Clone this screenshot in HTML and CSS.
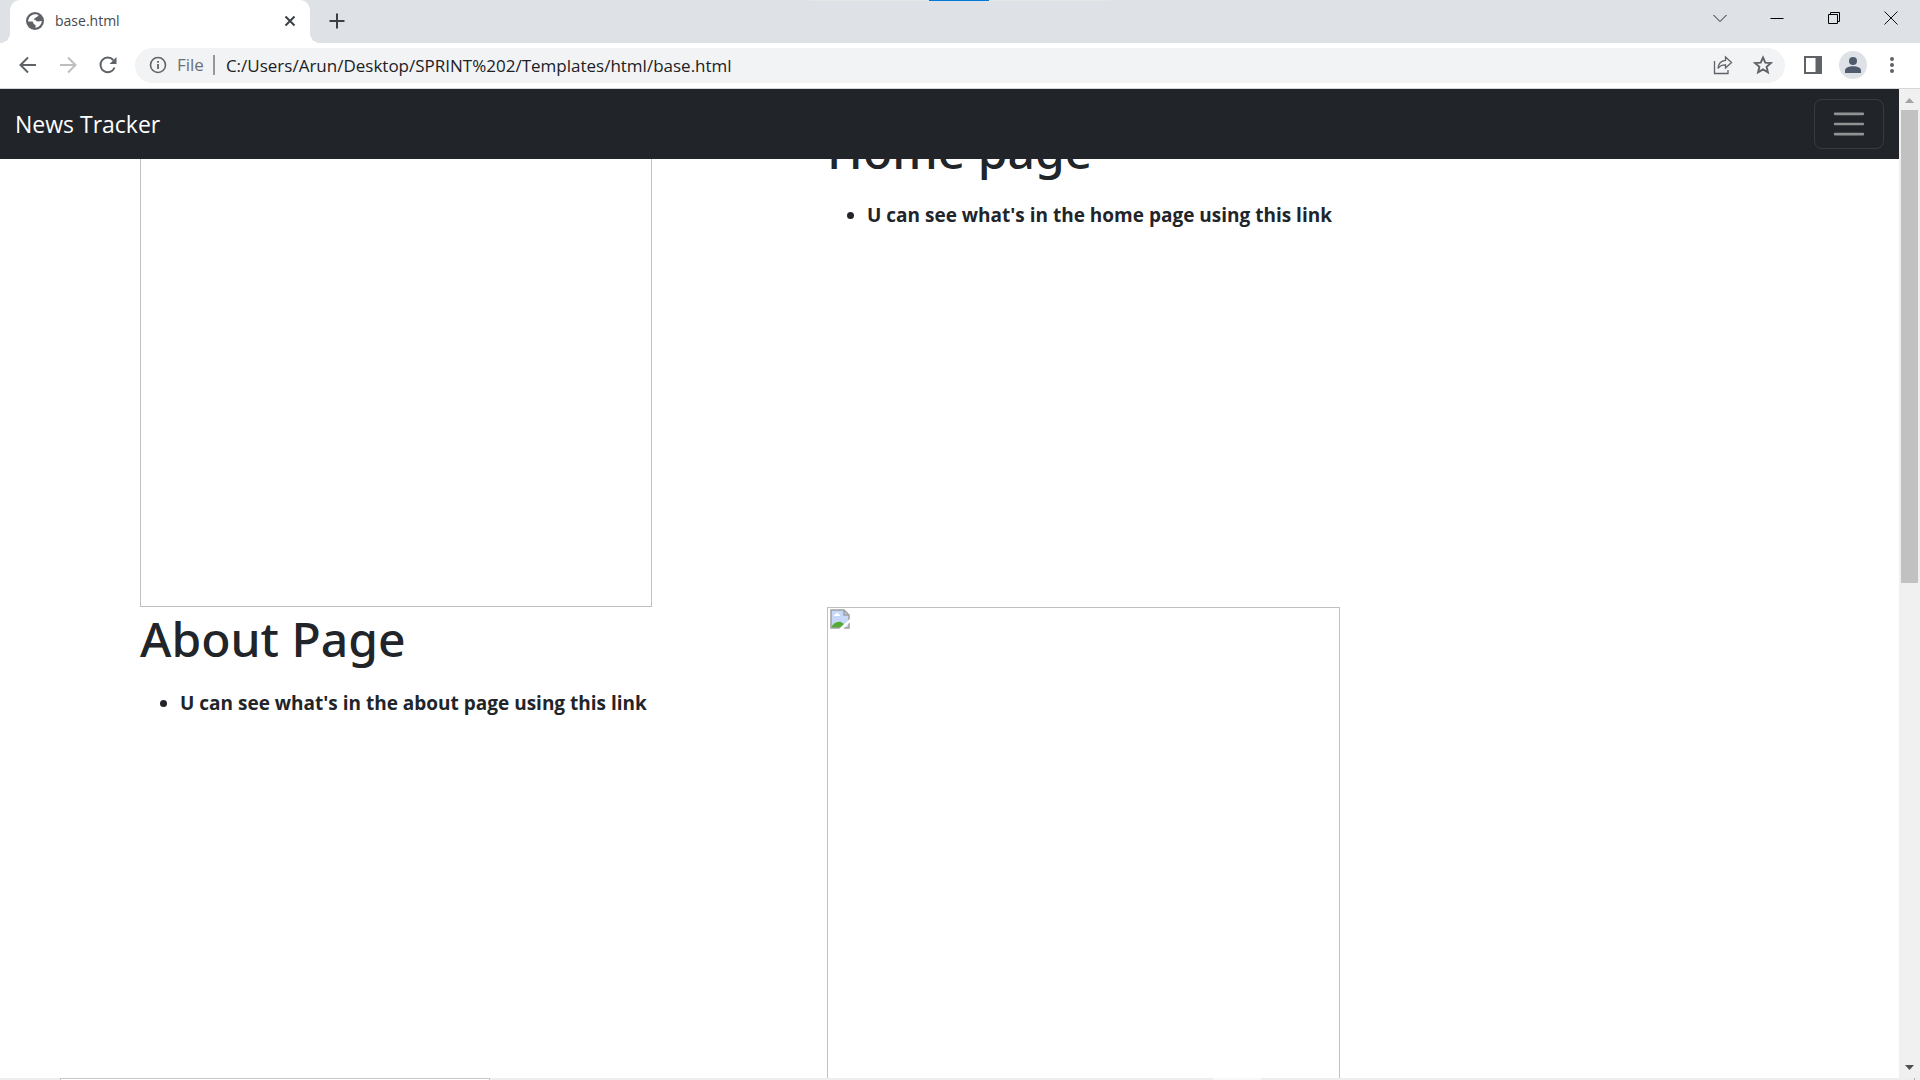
FILE: index.html
```html
<!DOCTYPE html>
<html lang="en">
<head>
<meta charset="utf-8">
<meta name="viewport" content="width=device-width, initial-scale=1">
<title>base.html</title>
<link rel="stylesheet" href="styles.css">
</head>
<body>
<div class="browser">
  <div class="tabstrip">
    <div class="tab">
      <svg class="globe" width="18" height="18" viewBox="0 0 18 18" aria-hidden="true"><circle cx="9" cy="9" r="9" fill="#5f6368"/><path d="M9 2.200c1.500 0 2.500.3 3.500.9-.2 1.200-1 1.700-2 1.800-1 .1-.9 1.300-2 1.500-.9.2-.8 1.200 0 1.400 1.500.2 1.700 1.600 3.500 1.600 1.300 0 2.500-.4 3.800-.4-.2 3.200-2.900 6.600-6.400 6.800-.6-.7.900-1.700.2-2.500-.7-.8-2.200-.9-2.200-2 0-1.300-.9-1.700-1.900-1.700H2.200C1.900 8.700 2.500 6.200 4.500 4.100 5.800 3 7.300 2.200 9 2.200z" fill="#fff"/></svg>
      <span class="tab-title">base.html</span>
      <button class="plain tab-close" aria-label="Close tab"><svg width="12" height="12" viewBox="0 0 12 12"><path d="M1.500 1.500l9 9M10.500 1.500l-9 9" stroke="#3c4043" stroke-width="2"/></svg></button>
    </div>
    <button class="plain new-tab" aria-label="New tab"><svg width="16" height="16" viewBox="0 0 16 16"><path d="M8 .5v15M.5 8h15" stroke="#3c4043" stroke-width="2"/></svg></button>
    <span class="drag-hint"></span>
    <div class="window-controls">
      <button class="plain" aria-label="Search tabs"><svg width="14" height="14" viewBox="0 0 14 14"><path d="M.5 4l6.500 6.500L13.500 4" fill="none" stroke="#222"/></svg></button>
      <button class="plain" aria-label="Minimize"><svg width="14" height="14" viewBox="0 0 14 14"><path d="M.5 7.500h13" stroke="#000"/></svg></button>
      <button class="plain" aria-label="Restore"><svg width="14" height="14" viewBox="0 0 14 14"><path d="M1.500 3.500h9v9h-9zM3.500 3.500v-2h9v9h-2" fill="none" stroke="#000"/></svg></button>
      <button class="plain" aria-label="Close"><svg width="14" height="14" viewBox="0 0 14 14"><path d="M.5.500l13 13M13.500.500l-13 13" stroke="#111"/></svg></button>
    </div>
  </div>

  <div class="toolbar">
    <div class="nav-buttons">
      <button class="plain" aria-label="Back"><svg width="20" height="20" viewBox="0 0 20 20"><path d="M18 10H3M10 2.500L2.500 10l7.500 7.500" fill="none" stroke="#5f6368" stroke-width="2"/></svg></button>
      <button class="plain" aria-label="Forward"><svg width="20" height="20" viewBox="0 0 20 20"><path d="M2 10h15M10 2.500l7.500 7.500-7.500 7.500" fill="none" stroke="#bcbec0" stroke-width="2"/></svg></button>
      <button class="plain" aria-label="Reload"><svg width="20" height="20" viewBox="0 0 20 20"><path d="M16.600 12.500A7.300 7.300 0 1 1 15.300 5" fill="none" stroke="#5f6368" stroke-width="2"/><path d="M18.500 2v7h-7z" fill="#5f6368"/></svg></button>
    </div>
    <div class="omnibox">
      <svg width="18" height="18" viewBox="0 0 18 18" aria-hidden="true"><circle cx="9" cy="9" r="7.500" fill="none" stroke="#5f6368" stroke-width="1.600"/><path d="M9 8v5M9 5v1.800" stroke="#5f6368" stroke-width="1.800"/></svg>
      <label class="scheme" for="url">File</label>
      <input class="url" id="url" type="text" value="C:/Users/Arun/Desktop/SPRINT%202/Templates/html/base.html">
      <button class="plain" aria-label="Share"><svg width="20" height="20" viewBox="0 0 20 20"><path d="M1.500 6v12.500H15V15" fill="none" stroke="#5f6368" stroke-width="1.300"/><path d="M12.500 2l6 5.500-6 5.500V9.800C9 9.700 6.500 11 5 13.500 5.300 9 8 5.800 12.500 5.300z" fill="none" stroke="#5f6368" stroke-width="1.300"/></svg></button>
      <button class="plain" aria-label="Bookmark"><svg width="20" height="20" viewBox="0 0 20 20"><path d="M10 2.500l2.300 5.100 5.500.5-4.200 3.700 1.300 5.500-4.900-2.900-4.900 2.900 1.300-5.500-4.200-3.700 5.500-.5z" fill="none" stroke="#5f6368" stroke-width="1.900"/></svg></button>
    </div>
    <div class="tools">
      <button class="plain" aria-label="Side panel"><svg width="18" height="18" viewBox="0 0 18 18"><path fill="#5f6368" fill-rule="evenodd" d="M0 0h18v18H0zM2 2v14h9.500V2z"/></svg></button>
      <button class="plain" aria-label="Profile"><svg width="28" height="28" viewBox="0 0 28 28"><circle cx="14" cy="14" r="14" fill="#dee1e6"/><circle cx="14" cy="10" r="4" fill="#4f5b6d"/><path d="M6 22v-2.500c0-3 4.500-4.200 8-4.200s8 1.200 8 4.200V22z" fill="#4f5b6d"/></svg></button>
      <button class="plain" aria-label="Menu"><svg width="6" height="18" viewBox="0 0 6 18"><g fill="#5f6368"><circle cx="3" cy="3" r="2"/><circle cx="3" cy="9" r="2"/><circle cx="3" cy="15" r="2"/></g></svg></button>
    </div>
  </div>

  <div class="viewport">
    <div class="page">
      <header class="navbar">
        <a class="brand" href="#">News Tracker</a>
        <button class="toggler" aria-label="Toggle navigation"><svg width="38" height="38" viewBox="0 0 30 30"><path d="M4 7h22M4 15h22M4 23h22" stroke="#909294" stroke-width="2" stroke-linecap="round"/></svg></button>
      </header>
      <main class="features">
        <div class="picture"></div>
        <section>
          <h1>Home page</h1>
          <ul><li>U can see what's in the home page using this link</li></ul>
        </section>
        <section>
          <h1>About Page</h1>
          <ul><li>U can see what's in the about page using this link</li></ul>
        </section>
        <div class="picture">
          <svg class="broken" width="20" height="20" viewBox="0 0 20 20" role="img" aria-label="Missing picture"><path d="M1 1h13l5 5v13H1z" fill="#c5d8f7"/><path d="M4 7c0-2 2-2 3-3 2 0 2 2 3 2v1z" fill="#fff"/><path d="M1 19c2-5 6-7 10-6l3 2-4 4z" fill="#56ab35"/><path d="M14 19h5v-5M10 19H1V1h13l5 5v5M14 1v5h5" fill="none" stroke="#a0a0a0" stroke-width="1.500"/><path d="M9 20L20 10v3l-7 7z" fill="#fff"/></svg>
        </div>
      </main>
    </div>
    <div class="scrollbar" aria-hidden="true">
      <svg width="9" height="5" viewBox="0 0 9 5"><path d="M4.500 0L9 5H0z" fill="#a3a3a3"/></svg>
      <div class="track"><div class="thumb"></div></div>
      <svg width="9" height="5" viewBox="0 0 9 5"><path d="M0 0h9L4.500 5z" fill="#505050"/></svg>
    </div>
  </div>

  <div class="taskbar" aria-hidden="true">
    <span class="task-search"></span>
    <span class="task-active"></span>
    <span class="task-end"></span>
  </div>
</div>
</body>
</html>
```
FILE: styles.css
```css
* { box-sizing: border-box; }

body {
  margin: 0;
  font-family: "Open Sans", "Noto Sans", sans-serif;
  color: #212529;
  background: #fff;
}

svg { display: block; flex: none; }

.plain {
  display: flex;
  align-items: center;
  justify-content: center;
  padding: 0;
  border: 0;
  background: none;
}

.browser {
  display: flex;
  flex-direction: column;
  height: 100vh;
  overflow: hidden;
}

/* Tab strip */
.tabstrip {
  position: relative;
  display: flex;
  flex: none;
  height: 43px;
  padding-left: 10px;
  background: #dee1e6;
}

.tab {
  position: relative;
  display: flex;
  align-items: center;
  width: 300px;
  padding: 0 14px 2px 16px;
  border-radius: 10px 10px 0 0;
  background: #fff;
}

.tab::before,
.tab::after {
  content: "";
  position: absolute;
  bottom: 0;
  width: 10px;
  height: 10px;
}

.tab::before {
  right: 100%;
  background: radial-gradient(circle at 0 0, transparent 10px, #fff 10px);
}

.tab::after {
  left: 100%;
  background: radial-gradient(circle at 100% 0, transparent 10px, #fff 10px);
}

.tab-title {
  flex: 1;
  padding-left: 11px;
  font-size: 14px;
  color: #45494d;
}

.new-tab {
  width: 54px;
  padding-bottom: 2px;
}

.drag-hint {
  position: absolute;
  top: 0;
  left: 809px;
  width: 301px;
  height: 1px;
  background: linear-gradient(90deg, #e6e6e6 120px, #0078d7 120px 180px, #e6e6e6 180px);
}

.window-controls {
  display: flex;
  margin-left: auto;
  padding-right: 1px;
}

.window-controls .plain {
  width: 57px;
  height: 36px;
}

/* Toolbar */
.toolbar {
  display: flex;
  flex: none;
  align-items: center;
  height: 46px;
  padding-bottom: 1px;
  border-bottom: 1px solid #d5d7da;
  background: #fff;
}

.nav-buttons {
  display: flex;
  gap: 20px;
  padding: 0 17px 0 18px;
}

.nav-buttons .plain { width: 20px; }

.omnibox {
  display: flex;
  flex: 1;
  align-items: center;
  height: 35px;
  padding: 0 12px 0 14px;
  border-radius: 18px;
  background: #f1f3f4;
}

.omnibox .plain { margin-left: 20px; }

.scheme {
  margin: 0 11px 0 10px;
  padding-right: 9px;
  border-right: 2px solid #96999c;
  font-size: 17px;
  line-height: 20px;
  color: #6b6f74;
}

.url {
  flex: 1;
  min-width: 0;
  padding: 0;
  border: 0;
  outline: 0;
  background: none;
  font: 17px "Open Sans", "Noto Sans", sans-serif;
  color: #202124;
}

.tools {
  display: flex;
  align-items: center;
  padding: 0 25px 0 19px;
}

.tools .plain + .plain { margin-left: 17px; }
.tools .plain:last-child { margin-left: 22px; }

/* Web page */
.viewport {
  display: flex;
  flex: 1;
  min-height: 0;
}

.page {
  flex: 1;
  overflow: hidden;
}

.navbar {
  position: relative;
  z-index: 1;
  display: flex;
  align-items: center;
  justify-content: space-between;
  height: 70px;
  padding: 0 15px;
  background: #212529;
}

.brand {
  font-size: 23px;
  color: #fff;
  text-decoration: none;
}

.toggler {
  padding: 5px 15px;
  border: 1px solid #373b3e;
  border-radius: 8px;
  background: none;
}

.features {
  display: grid;
  grid-template-columns: 512px 513px;
  grid-template-rows: 488px 488px;
  column-gap: 175px;
  margin-top: -40px;
  padding-left: 140px;
}

.picture {
  height: 100%;
  padding: 1px 2px;
  border: 1px solid #c0c0c0;
}

.picture:last-child { height: 513px; }

h1 {
  margin: 0 0 8px;
  font-family: "Noto Sans", "Open Sans", sans-serif;
  font-size: 48px;
  font-weight: 500;
  line-height: 64px;
}

ul {
  margin: 0;
  padding-left: 40px;
  font-size: 19px;
  font-weight: 700;
  line-height: 48px;
}

/* Scrollbar */
.scrollbar {
  display: flex;
  flex: none;
  flex-direction: column;
  align-items: center;
  width: 21px;
  padding: 9px 0 8px;
  background: #f0f0f0;
}

.track {
  flex: 1;
  width: 17px;
  padding: 7px 0 9px;
}

.thumb {
  height: 50%;
  background: #c1c1c1;
}

/* Top edge of the desktop taskbar */
.taskbar {
  display: flex;
  flex: none;
  height: 2px;
  padding: 0 5px 0 60px;
  background: #eee;
}

.task-search {
  width: 430px;
  border: 1px solid #c8c8c8;
  border-bottom: 0;
  background: #fff;
}

.task-active {
  width: 48px;
  margin-left: 723px;
  background: #f8f8f8;
}

.task-end {
  width: 1px;
  margin-left: auto;
  background: #b0b0b0;
}
```
